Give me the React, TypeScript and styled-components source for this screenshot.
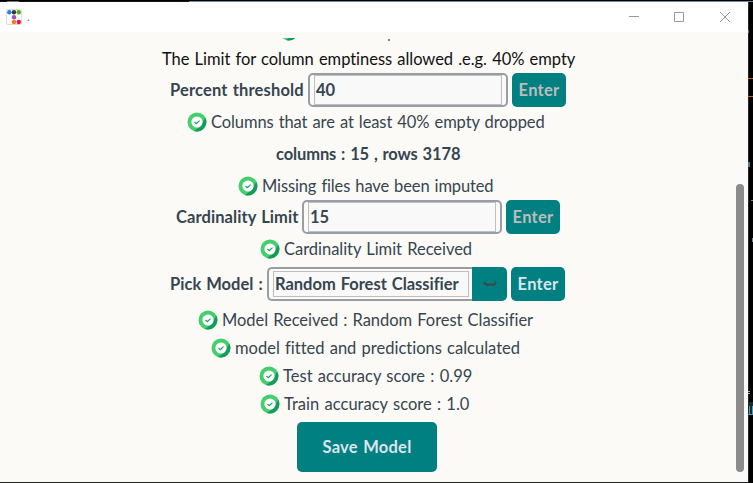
import React from "react";
import styled, { createGlobalStyle } from "styled-components";

const Global = createGlobalStyle`
  * { box-sizing: border-box; }
  html, body { margin: 0; background: #000; overflow: hidden; }
  body { font-family: "Lato", "Open Sans", sans-serif; font-size: 16.5px; font-variant-ligatures: none; }
`;

const Desktop = styled.div`
  position: relative;
  width: 753px;
  height: 483px;
  background: #000;
  display: flex;
  overflow: hidden;
`;
const TopEdge = styled.div`
  position: absolute;
  left: 0;
  right: 0;
  top: 1px;
  height: 1px;
  background: linear-gradient(90deg, #181214 0 7px, #777 7px 19px, #181214 19px 189px, #6b8b99 189px);
`;
const Speck = styled.i<{ $y: number; $h: number; $c: string; $x?: number; $w?: number }>`
  position: absolute;
  left: ${(p) => p.$x ?? 748}px;
  top: ${(p) => p.$y}px;
  width: ${(p) => p.$w ?? 5}px;
  height: ${(p) => p.$h}px;
  background: ${(p) => p.$c};
`;
const Window = styled.main`
  position: relative;
  width: 749px;
  height: 480px;
  margin-top: 2px;
  background: #fbfaf6;
  border-right: 1px solid #25272a;
  box-shadow: 0 1px 0 #222;
  display: flex;
  flex-direction: column;
`;
const TitleBar = styled.header`
  height: 30px;
  flex: none;
  background: #fff;
  display: flex;
  align-items: center;
  padding-left: 6px;
`;
const Title = styled.span`
  flex: 1;
  padding-left: 5px;
  font-size: 12px;
  line-height: 12px;
  color: #777;
`;
const Controls = styled.div`
  display: grid;
  grid-template-columns: 45px 46px 10px;
  padding-right: 18px;
  height: 10px;
`;
const Body = styled.div`
  flex: 1;
  min-height: 0;
  display: flex;
  overflow: hidden;
`;
const Column = styled.section`
  width: 736px;
  display: flex;
  flex-direction: column;
`;
const Row = styled.div<{ $h: number; $x: number }>`
  height: ${(p) => p.$h}px;
  flex: none;
  padding-left: ${(p) => p.$x}px;
  display: flex;
  align-items: center;
  gap: 4px;
`;
const Clip = styled.div`
  height: 15px;
  flex: none;
  padding: 6px 0 0 279px;
  display: flex;
`;
const ClipView = styled.div`
  height: 3px;
  width: 112px;
  overflow: hidden;
  display: flex;
  align-items: flex-end;
  justify-content: space-between;
`;
const Descender = styled.i`
  width: 2px;
  height: 2px;
  margin-right: 1px;
  background: #8a8480;
`;
const Text = styled.span<{ $w: number; $ls?: number; $bold?: boolean; $color?: string }>`
  width: ${(p) => p.$w}px;
  flex: none;
  white-space: nowrap;
  line-height: 20px;
  letter-spacing: ${(p) => p.$ls ?? 0}px;
  word-spacing: 1px;
  font-weight: ${(p) => (p.$bold ? 700 : 400)};
  color: ${(p) => p.$color ?? "#36454f"};
`;
const Field = styled.div<{ $w: number; $combo?: boolean }>`
  width: ${(p) => p.$w}px;
  height: 34px;
  border: 2px solid #979ea5;
  border-radius: ${(p) => (p.$combo ? "5px 0 0 5px" : "5px")};
  border-right-width: ${(p) => (p.$combo ? 0 : 2)}px;
  padding: ${(p) => (p.$combo ? "2px 3px 2px 4px" : "0 4px 0 4px")};
  background: #fbfaf6;
  display: flex;
`;
const Inner = styled.div`
  flex: 1;
  min-width: 0;
  border: 1px solid #bfbfbf;
  background: #f9f9f9;
  display: flex;
  align-items: center;
  padding-left: 1px;
`;
const Combo = styled.div`
  display: flex;
`;
const Arrow = styled.button`
  width: 35px;
  height: 34px;
  padding: 0;
  border: 0;
  border-radius: 0 5px 5px 0;
  background: #008080;
  display: flex;
  align-items: center;
  justify-content: center;
`;
const Button = styled.button<{ $w: number; $h: number; $disabled?: boolean }>`
  width: ${(p) => p.$w}px;
  height: ${(p) => p.$h}px;
  padding: 0 0 1px;
  border: 0;
  border-radius: 5px;
  background: #008080;
  color: ${(p) => (p.$disabled ? "#bdbdbd" : "#dce4ee")};
  font: 700 16.5px "Lato", sans-serif;
  line-height: 20px;
  letter-spacing: 0.25px;
  word-spacing: 1px;
  white-space: nowrap;
`;
const ScrollTrack = styled.aside`
  width: 8px;
  padding-top: 152px;
`;
const ScrollThumb = styled.div`
  height: 288px;
  border-radius: 4px;
  background: #8b8b8b;
`;

const Check = () => (
  <svg width="20" height="20" viewBox="0 0 20 20">
    <circle cx="10" cy="10" r="9.5" fill="#43cf6b" />
    <path d="M18.2 5.5A9.5 9.5 0 0 1 7 19L13.8 14Z" fill="#159b5d" />
    <circle cx="10" cy="10" r="5.6" fill="#fff" />
    <path d="M7.5 10l1.8 1.6 3.2-3" fill="none" stroke="#16a05f" strokeWidth="1.2" />
  </svg>
);

const Logo = () => (
  <svg width="16" height="16" viewBox="0 0 16 16">
    <rect x=".5" y=".5" width="15" height="15" rx="1" fill="#fff" stroke="#ddd" />
    <circle cx="3.3" cy="3.3" r="2.2" fill="#2485e8" />
    <circle cx="8" cy="3.3" r="2.2" fill="#37373d" />
    <circle cx="12.8" cy="3.3" r="2.2" fill="#43b51f" />
    <circle cx="8" cy="8.2" r="2.2" fill="#9652bd" />
    <circle cx="8" cy="13" r="2.2" fill="#ff7418" />
    <circle cx="12.8" cy="13" r="2.2" fill="#fb0d3f" />
  </svg>
);

type StatusProps = { h: number; x: number; w: number; ls?: number; children: string };
const Status = ({ h, x, w, ls, children }: StatusProps) => (
  <Row $h={h} $x={x}>
    <Check />
    <Text $w={w} $ls={ls}>{children}</Text>
  </Row>
);

export default function App() {
  return (
    <Desktop>
      <Global />
      <TopEdge />
      <Window>
        <TitleBar>
          <Logo />
          <Title>.</Title>
          <Controls>
            <svg width="10" height="10"><path d="M0 4.5h10" stroke="#999" /></svg>
            <svg width="10" height="10"><path d="M.5.5h9v9h-9z" fill="none" stroke="#999" /></svg>
            <svg width="10" height="10"><path d="M0 0l10 10M10 0L0 10" stroke="#999" /></svg>
          </Controls>
        </TitleBar>
        <Body>
          <Column>
            <Clip>
              <ClipView><Check /><Descender /></ClipView>
            </Clip>
            <Row $h={24} $x={162}>
              <Text $w={413} $ls={-0.04} $color="#111">The Limit for column emptiness allowed .e.g. 40% empty</Text>
            </Row>
            <Row $h={38} $x={170}>
              <Text $w={134} $ls={0.16} $bold>Percent threshold</Text>
              <Field $w={200}><Inner><Text $w={30} $bold>40</Text></Inner></Field>
              <Button $w={54} $h={34} $disabled>Enter</Button>
            </Row>
            <Status h={26} x={187} w={334} ls={-0.1}>Columns that are at least 40% empty dropped</Status>
            <Row $h={38} $x={276}>
              <Text $w={184} $ls={-0.12} $bold>columns : 15 , rows 3178</Text>
            </Row>
            <Status h={26} x={238} w={232} ls={-0.13}>Missing files have been imputed</Status>
            <Row $h={36} $x={176}>
              <Text $w={122} $ls={0.08} $bold>Cardinality Limit</Text>
              <Field $w={200}><Inner><Text $w={30} $bold>15</Text></Inner></Field>
              <Button $w={54} $h={34} $disabled>Enter</Button>
            </Row>
            <Status h={28} x={260} w={189} ls={-0.03}>Cardinality Limit Received</Status>
            <Row $h={42} $x={170}>
              <Text $w={93} $ls={0.02} $bold>Pick Model :</Text>
              <Combo>
                <Field $w={205} $combo>
                  <Inner><Text $w={186} $ls={-0.02} $bold>Random Forest Classifier</Text></Inner>
                </Field>
                <Arrow>
                  <svg width="14" height="8" viewBox="0 0 14 8">
                    <path d="M1 2Q2.5 5 5.2 4.7L7 4.2L8.8 4.7Q11.5 5 13 2" fill="none" stroke="#3f454d" strokeWidth="2" />
                  </svg>
                </Arrow>
              </Combo>
              <Button $w={54} $h={34}>Enter</Button>
            </Row>
            <Status h={30} x={198} w={311} ls={-0.04}>Model Received : Random Forest Classifier</Status>
            <Status h={26} x={211} w={285} ls={0}>model fitted and predictions calculated</Status>
            <Status h={30} x={259} w={189} ls={0.02}>Test accuracy score : 0.99</Status>
            <Status h={26} x={260} w={186} ls={0.02}>Train accuracy score : 1.0</Status>
            <Row $h={60} $x={297}>
              <Button $w={140} $h={50}>Save Model</Button>
            </Row>
          </Column>
          <ScrollTrack><ScrollThumb /></ScrollTrack>
        </Body>
      </Window>
      <Speck $y={30} $h={3} $c="#a4661d" $w={1} />
      <Speck $y={78} $h={1} $c="#c66b10" />
      <Speck $y={96} $h={1} $c="#c66b10" />
      <Speck $y={162} $h={5} $c="#457d93" $w={2} />
      <Speck $y={200} $h={1} $c="#8c8178" $x={751} $w={2} />
      <Speck $y={238} $h={4} $c="#65839a" $x={752} $w={1} />
      <Speck $y={391} $h={1} $c="#aaa" $w={2} />
      <Speck $y={393} $h={1} $c="#aaa" $w={2} />
      <Speck $y={402} $h={12} $c="#142a35" />
      <Speck $y={406} $h={8} $c="#5a9a8a" $x={749} $w={1} />
      <Speck $y={414} $h={1} $c="#469bbb" />
      <Speck $y={406} $h={8} $c="#469bbb" $x={752} $w={1} />
    </Desktop>
  );
}
